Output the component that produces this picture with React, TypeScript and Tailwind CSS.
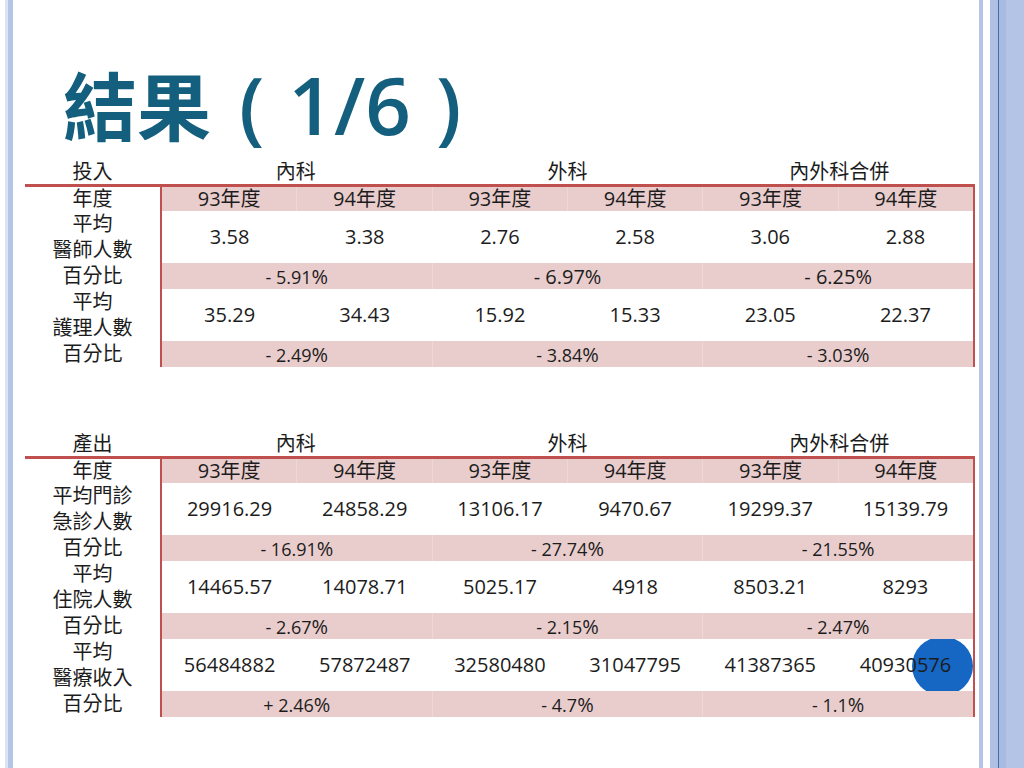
const FONT = "font-['Open_Sans','Noto_Sans_CJK_TC',sans-serif]";

type Pct = { text: string; small?: boolean };

interface Block {
  title: string;
  rows: { label: string[]; values: string[]; pct: Pct[] }[];
}

const years = ["93年度", "94年度", "93年度", "94年度", "93年度", "94年度"];
const groups = ["內科", "外科", "內外科合併"];

const inputBlock: Block = {
  title: "投入",
  rows: [
    {
      label: ["平均", "醫師人數"],
      values: ["3.58", "3.38", "2.76", "2.58", "3.06", "2.88"],
      pct: [{ text: "- 5.91", small: true }, { text: "- 6.97" }, { text: "- 6.25" }],
    },
    {
      label: ["平均", "護理人數"],
      values: ["35.29", "34.43", "15.92", "15.33", "23.05", "22.37"],
      pct: [
        { text: "- 2.49", small: true },
        { text: "- 3.84", small: true },
        { text: "- 3.03", small: true },
      ],
    },
  ],
};

const outputBlock: Block = {
  title: "產出",
  rows: [
    {
      label: ["平均門診", "急診人數"],
      values: ["29916.29", "24858.29", "13106.17", "9470.67", "19299.37", "15139.79"],
      pct: [
        { text: "- 16.91", small: true },
        { text: "- 27.74", small: true },
        { text: "- 21.55", small: true },
      ],
    },
    {
      label: ["平均", "住院人數"],
      values: ["14465.57", "14078.71", "5025.17", "4918", "8503.21", "8293"],
      pct: [
        { text: "- 2.67", small: true },
        { text: "- 2.15", small: true },
        { text: "- 2.47", small: true },
      ],
    },
    {
      label: ["平均", "醫療收入"],
      values: ["56484882", "57872487", "32580480", "31047795", "41387365", "40930576"],
      pct: [
        { text: "+ 2.46", small: true },
        { text: "- 4.7", small: true },
        { text: "- 1.1", small: true },
      ],
    },
  ],
};

function PercentRow({ pct }: { pct: Pct[] }) {
  return (
    <div className="flex h-[26px]">
      <div className="w-[135px] flex items-center justify-center">百分比</div>
      <div className="flex-1 flex bg-[#e9cdcd] border-x-2 border-[#c0504d]">
        {pct.map((p, i) => (
          <div
            key={i}
            className={`flex-1 flex items-baseline justify-center pt-[1px] ${i < 2 ? "border-r border-[#eed9d9]" : ""}`}
          >
            <span className={p.small ? "text-[18px] font-medium" : ""}>{p.text}</span>
            <span>%</span>
          </div>
        ))}
      </div>
    </div>
  );
}

function DataTable({ block, marker }: { block: Block; marker?: boolean }) {
  return (
    <div className="ml-[12px] w-[950px] text-[20px] leading-[26px] text-[#1c1c1c]">
      <div className="flex h-[27px] border-b-[3px] border-[#c0504d]">
        <div className="w-[135px] flex items-center justify-center">{block.title}</div>
        <div className="flex-1 flex">
          {groups.map((g) => (
            <div key={g} className="flex-1 flex items-center justify-center">
              {g}
            </div>
          ))}
        </div>
      </div>

      <div className="flex h-[24px]">
        <div className="w-[135px] flex items-center justify-center">年度</div>
        <div className="flex-1 flex bg-[#e9cdcd] border-x-2 border-[#c0504d]">
          {years.map((y, i) => (
            <div
              key={i}
              className={`flex-1 flex items-center justify-center ${i < 5 ? "border-r border-[#eed9d9]" : ""}`}
            >
              {y}
            </div>
          ))}
        </div>
      </div>

      {block.rows.map((row, r) => (
        <div key={r}>
          <div className="flex h-[52px]">
            <div className="w-[135px] flex flex-col items-center justify-center">
              {row.label.map((l) => (
                <span key={l}>{l}</span>
              ))}
            </div>
            <div className="flex-1 flex border-x-2 border-[#c0504d] overflow-hidden">
              {row.values.map((v, i) => {
                const showMarker = marker && r === block.rows.length - 1 && i === 5;
                return (
                  <div key={i} className="relative flex-1 flex items-center justify-center">
                    {showMarker && (
                      <div className="absolute right-0 top-[-2px] w-[61px] h-[58px] rounded-full bg-[#1666c4]" />
                    )}
                    <span className="relative">{v}</span>
                  </div>
                );
              })}
            </div>
          </div>
          <PercentRow pct={row.pct} />
        </div>
      ))}
    </div>
  );
}

export default function App() {
  return (
    <div className={`w-[1024px] h-[768px] flex bg-white overflow-hidden ${FONT}`}>
      <div className="w-[5px] shrink-0" />
      <div className="w-[3px] shrink-0 bg-[#dde3f3]" />
      <div className="w-[5px] shrink-0 bg-[#b5c5e6]" />

      <div className="w-[966px] shrink-0 pt-[64px]">
        <h1 className="h-[76px] pl-[50px] flex items-baseline leading-none text-[#135f7d] font-bold">
          <span className="text-[74px] font-['Noto_Sans_CJK_TC',sans-serif]">結果</span>
          <span className="ml-[28px] text-[80px] font-semibold font-['Open_Sans',sans-serif]">(</span>
          <span className="ml-[24px] text-[80px] font-semibold font-['Open_Sans',sans-serif]">1/6</span>
          <span className="ml-[25px] text-[80px] font-semibold font-['Open_Sans',sans-serif]">)</span>
        </h1>
        <div className="mt-[20px]">
          <DataTable block={inputBlock} />
        </div>
        <div className="mt-[65px]">
          <DataTable block={outputBlock} marker />
        </div>
      </div>

      <div className="w-[4px] shrink-0 bg-[#b5c5e6]" />
      <div className="w-[7px] shrink-0" />
      <div className="w-[8px] shrink-0 bg-[#b0c0e4]" />
      <div className="w-[1px] shrink-0 bg-[#3b6eb4]" />
      <div className="w-[7px] shrink-0 bg-[#aabbe2]" />
      <div className="flex-1 bg-[#b4c4e6]" />
    </div>
  );
}
